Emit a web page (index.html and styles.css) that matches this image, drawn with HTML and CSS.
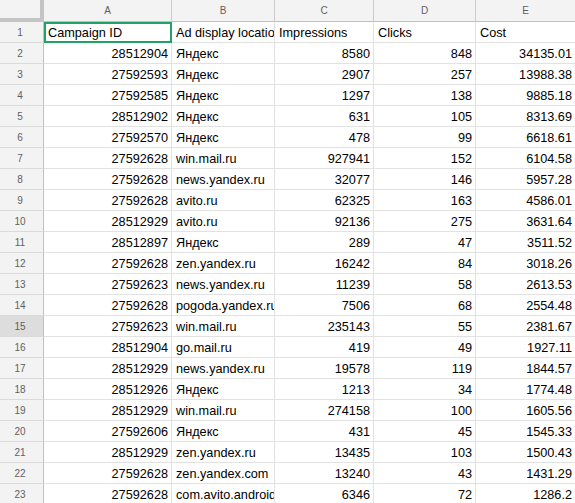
FILE: index.html
```html
<!DOCTYPE html>
<html>
<head>
<meta charset="utf-8">
<link rel="stylesheet" href="styles.css">
</head>
<body>
<div class="sheet">
  <div class="corner"></div>
  <div class="ch">A</div><div class="ch">B</div><div class="ch">C</div><div class="ch">D</div><div class="ch">E</div>

  <div class="rh">1</div><div class="c sel">Campaign ID</div><div class="c">Ad display location</div><div class="c">Impressions</div><div class="c">Clicks</div><div class="c">Cost</div>
  <div class="rh">2</div><div class="c n">28512904</div><div class="c">Яндекс</div><div class="c n">8580</div><div class="c n">848</div><div class="c n">34135.01</div>
  <div class="rh">3</div><div class="c n">27592593</div><div class="c">Яндекс</div><div class="c n">2907</div><div class="c n">257</div><div class="c n">13988.38</div>
  <div class="rh">4</div><div class="c n">27592585</div><div class="c">Яндекс</div><div class="c n">1297</div><div class="c n">138</div><div class="c n">9885.18</div>
  <div class="rh">5</div><div class="c n">28512902</div><div class="c">Яндекс</div><div class="c n">631</div><div class="c n">105</div><div class="c n">8313.69</div>
  <div class="rh">6</div><div class="c n">27592570</div><div class="c">Яндекс</div><div class="c n">478</div><div class="c n">99</div><div class="c n">6618.61</div>
  <div class="rh">7</div><div class="c n">27592628</div><div class="c">win.mail.ru</div><div class="c n">927941</div><div class="c n">152</div><div class="c n">6104.58</div>
  <div class="rh">8</div><div class="c n">27592628</div><div class="c">news.yandex.ru</div><div class="c n">32077</div><div class="c n">146</div><div class="c n">5957.28</div>
  <div class="rh">9</div><div class="c n">27592628</div><div class="c">avito.ru</div><div class="c n">62325</div><div class="c n">163</div><div class="c n">4586.01</div>
  <div class="rh">10</div><div class="c n">28512929</div><div class="c">avito.ru</div><div class="c n">92136</div><div class="c n">275</div><div class="c n">3631.64</div>
  <div class="rh">11</div><div class="c n">28512897</div><div class="c">Яндекс</div><div class="c n">289</div><div class="c n">47</div><div class="c n">3511.52</div>
  <div class="rh">12</div><div class="c n">27592628</div><div class="c">zen.yandex.ru</div><div class="c n">16242</div><div class="c n">84</div><div class="c n">3018.26</div>
  <div class="rh">13</div><div class="c n">27592623</div><div class="c">news.yandex.ru</div><div class="c n">11239</div><div class="c n">58</div><div class="c n">2613.53</div>
  <div class="rh">14</div><div class="c n">27592628</div><div class="c">pogoda.yandex.ru</div><div class="c n">7506</div><div class="c n">68</div><div class="c n">2554.48</div>
  <div class="rh hover">15</div><div class="c n">27592623</div><div class="c">win.mail.ru</div><div class="c n">235143</div><div class="c n">55</div><div class="c n">2381.67</div>
  <div class="rh">16</div><div class="c n">28512904</div><div class="c">go.mail.ru</div><div class="c n">419</div><div class="c n">49</div><div class="c n">1927.11</div>
  <div class="rh">17</div><div class="c n">28512929</div><div class="c">news.yandex.ru</div><div class="c n">19578</div><div class="c n">119</div><div class="c n">1844.57</div>
  <div class="rh">18</div><div class="c n">28512926</div><div class="c">Яндекс</div><div class="c n">1213</div><div class="c n">34</div><div class="c n">1774.48</div>
  <div class="rh">19</div><div class="c n">28512929</div><div class="c">win.mail.ru</div><div class="c n">274158</div><div class="c n">100</div><div class="c n">1605.56</div>
  <div class="rh">20</div><div class="c n">27592606</div><div class="c">Яндекс</div><div class="c n">431</div><div class="c n">45</div><div class="c n">1545.33</div>
  <div class="rh">21</div><div class="c n">28512929</div><div class="c">zen.yandex.ru</div><div class="c n">13435</div><div class="c n">103</div><div class="c n">1500.43</div>
  <div class="rh">22</div><div class="c n">27592628</div><div class="c">zen.yandex.com</div><div class="c n">13240</div><div class="c n">43</div><div class="c n">1431.29</div>
  <div class="rh">23</div><div class="c n">27592628</div><div class="c">com.avito.android</div><div class="c n">6346</div><div class="c n">72</div><div class="c n">1286.2</div>
</div>
</body>
</html>
```
FILE: styles.css
```css
html, body {
  margin: 0;
  padding: 0;
  background: #fff;
  overflow: hidden;
}
.sheet {
  display: grid;
  grid-template-columns: 44px 128px 103px 99px 102px 100px;
  grid-template-rows: 22px;
  grid-auto-rows: 21px;
  font-family: "Liberation Sans", Arial, sans-serif;
  font-size: 12.7px;
  color: #000;
  width: 576px;
}
.corner {
  box-sizing: border-box;
  background: #f3f3f3;
  border-right: 4px solid #c4c4c4;
  border-bottom: 4px solid #c4c4c4;
}
.ch {
  box-sizing: border-box;
  background: #f3f3f3;
  border-right: 1px solid #cccccc;
  border-bottom: 1px solid #c0c0c0;
  color: #5f5f5f;
  font-size: 10px;
  text-align: center;
  line-height: 21px;
}
.rh {
  box-sizing: border-box;
  background: #f3f3f3;
  border-right: 1px solid #c0c0c0;
  border-bottom: 1px solid #dadada;
  color: #5f5f5f;
  font-size: 10px;
  text-align: center;
  line-height: 20px;
  padding-top: 1px;
  padding-right: 3px;
}
.rh.hover {
  background: #dddddd;
}
.c {
  box-sizing: border-box;
  border-right: 1px solid #e2e2e2;
  border-bottom: 1px solid #e2e2e2;
  line-height: 20px;
  padding: 1px 3px 0 4px;
  white-space: nowrap;
  overflow: hidden;
}
.c.n {
  text-align: right;
  text-overflow: clip;
}
.sel {
  position: relative;
  overflow: visible;
}
.sel::after {
  content: "";
  position: absolute;
  left: 0;
  top: 0;
  right: -1px;
  bottom: -1px;
  border: 2px solid #21a366;
}
```
